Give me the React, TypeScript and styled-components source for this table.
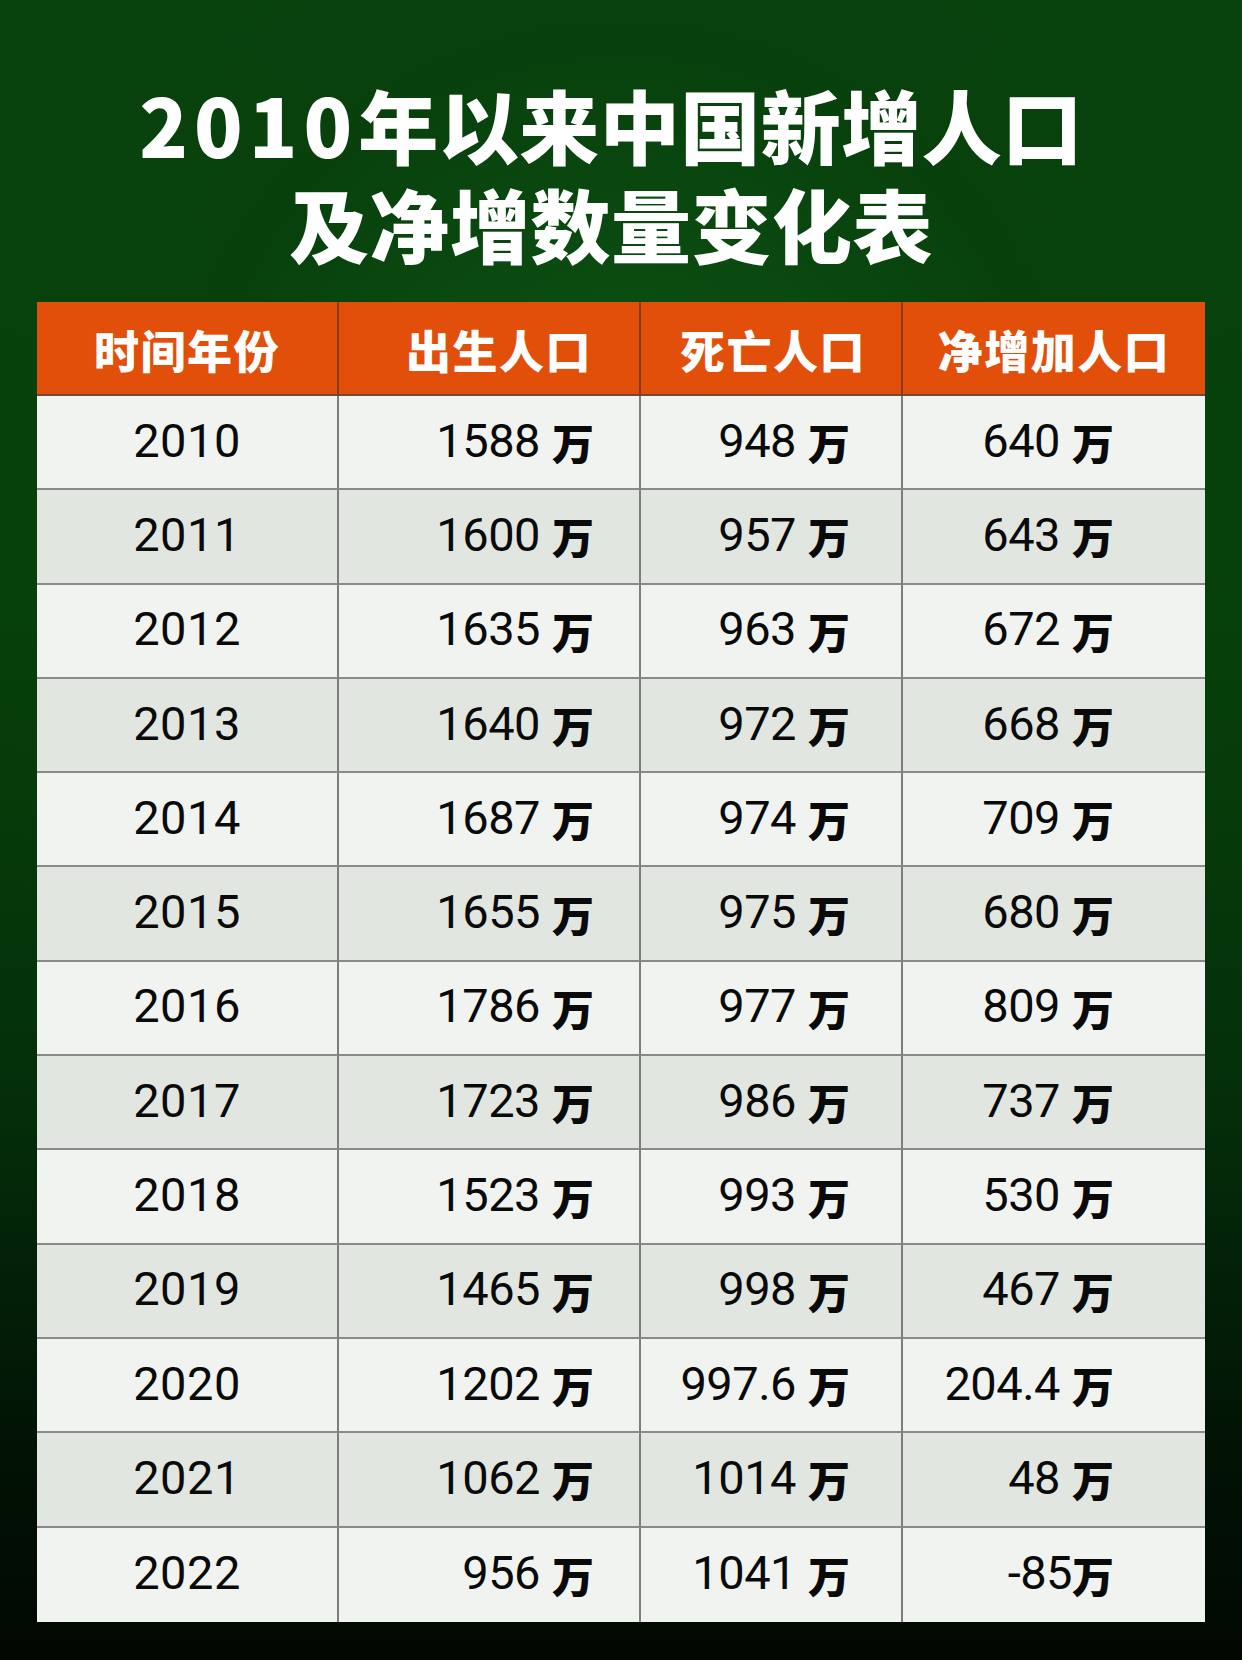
import React from "react";
import styled, { createGlobalStyle } from "styled-components";

const Global = createGlobalStyle`
  html, body { margin: 0; padding: 0; }
  body {
    width: 1242px;
    min-height: 1660px;
    background: #021202;
    font-family: "Noto Sans CJK SC", "Noto Sans", sans-serif;
  }
`;

const Page = styled.div`
  width: 1242px;
  height: 1660px;
  box-sizing: border-box;
  padding: 74px 37px 0;
  display: flex;
  flex-direction: column;
  align-items: stretch;
  background:
    radial-gradient(ellipse 75% 55% at 50% 28%, rgba(14, 86, 22, 0.9) 0%, rgba(8, 64, 12, 0.6) 45%, rgba(0, 0, 0, 0) 80%),
    linear-gradient(180deg, #08420d 0%, #074209 35%, #04300a 65%, #021205 88%, #010801 100%);
`;

const Title = styled.h1`
  margin: 0 0 30px;
  padding-right: 20px;
  text-align: center;
  color: #ffffff;
  font-family: "Noto Sans CJK SC", sans-serif;
  font-weight: 900;
  font-size: 80px;
  line-height: 99px;
  letter-spacing: 0.5px;
`;

const TitleLine = styled.div`
  display: block;
`;

const Digits = styled.span`
  letter-spacing: 6px;
`;

const Table = styled.div`
  display: grid;
  grid-template-columns: 302px 302px 262px 302px;
  width: 1168px;
`;

const HeadCell = styled.div<{ $last?: boolean; $shift?: number }>`
  height: 94px;
  box-sizing: border-box;
  background: #e24f0a;
  border-right: ${(p) => (p.$last ? "none" : "2px solid #8a3a14")};
  border-bottom: 2px solid #6e4a3a;
  display: flex;
  align-items: center;
  justify-content: center;
  color: #ffffff;
  font-family: "Noto Sans CJK SC", sans-serif;
  font-weight: 900;
  font-size: 45px;
  letter-spacing: 1.5px;
  padding-top: 2px;
  padding-left: ${(p) => p.$shift ?? 0}px;
`;

const Cell = styled.div<{ $alt: boolean; $last?: boolean; $bottom?: boolean; $pr?: number }>`
  height: 94.3px;
  box-sizing: border-box;
  background: ${(p) => (p.$alt ? "#e2e6e1" : "#f1f3f0")};
  border-right: ${(p) => (p.$last ? "none" : "2px solid #7d7d7d")};
  border-bottom: ${(p) => (p.$bottom ? "none" : "2px solid #8a8a8a")};
  display: flex;
  align-items: center;
  justify-content: ${(p) => (p.$pr === undefined ? "center" : "flex-end")};
  padding-right: ${(p) => (p.$pr === undefined ? 0 : p.$pr)}px;
  color: #0a0a0a;
`;

const Year = styled.span`
  font-family: Roboto, "Liberation Sans", sans-serif;
  font-size: 47px;
  letter-spacing: 0.5px;
  line-height: 1;
  margin-top: -4px;
`;

const Num = styled.span`
  font-family: Roboto, "Liberation Sans", sans-serif;
  font-size: 47px;
  letter-spacing: -0.5px;
  line-height: 1;
  margin-top: -4px;
`;

const Unit = styled.span<{ $tight?: boolean }>`
  font-family: "Noto Sans CJK SC", sans-serif;
  font-weight: 900;
  font-size: 42px;
  line-height: 1;
  margin-left: ${(p) => (p.$tight ? 0 : 12)}px;
`;

type Row = [string, string, string, string];

const rows: Row[] = [
  ["2010", "1588", "948", "640"],
  ["2011", "1600", "957", "643"],
  ["2012", "1635", "963", "672"],
  ["2013", "1640", "972", "668"],
  ["2014", "1687", "974", "709"],
  ["2015", "1655", "975", "680"],
  ["2016", "1786", "977", "809"],
  ["2017", "1723", "986", "737"],
  ["2018", "1523", "993", "530"],
  ["2019", "1465", "998", "467"],
  ["2020", "1202", "997.6", "204.4"],
  ["2021", "1062", "1014", "48"],
  ["2022", "956", "1041", "-85"],
];

const heads = ["时间年份", "出生人口", "死亡人口", "净增加人口"];
const headShift = [0, 20, 4, 0];
const pads = [45, 51, 91];

export default function App() {
  return (
    <>
      <Global />
      <Page>
        <Title>
          <TitleLine>
            <Digits>2010</Digits>年以来中国新增人口
          </TitleLine>
          <TitleLine>及净增数量变化表</TitleLine>
        </Title>
        <Table>
          {heads.map((h, i) => (
            <HeadCell key={h} $last={i === 3} $shift={headShift[i]}>
              {h}
            </HeadCell>
          ))}
          {rows.map((r, ri) => {
            const alt = ri % 2 === 1;
            const bottom = ri === rows.length - 1;
            return (
              <React.Fragment key={r[0]}>
                <Cell $alt={alt} $bottom={bottom}>
                  <Year>{r[0]}</Year>
                </Cell>
                {r.slice(1).map((v, ci) => (
                  <Cell key={ci} $alt={alt} $bottom={bottom} $last={ci === 2} $pr={pads[ci]}>
                    <Num>{v}</Num>
                    <Unit $tight={v === "-85"}>万</Unit>
                  </Cell>
                ))}
              </React.Fragment>
            );
          })}
        </Table>
      </Page>
    </>
  );
}
